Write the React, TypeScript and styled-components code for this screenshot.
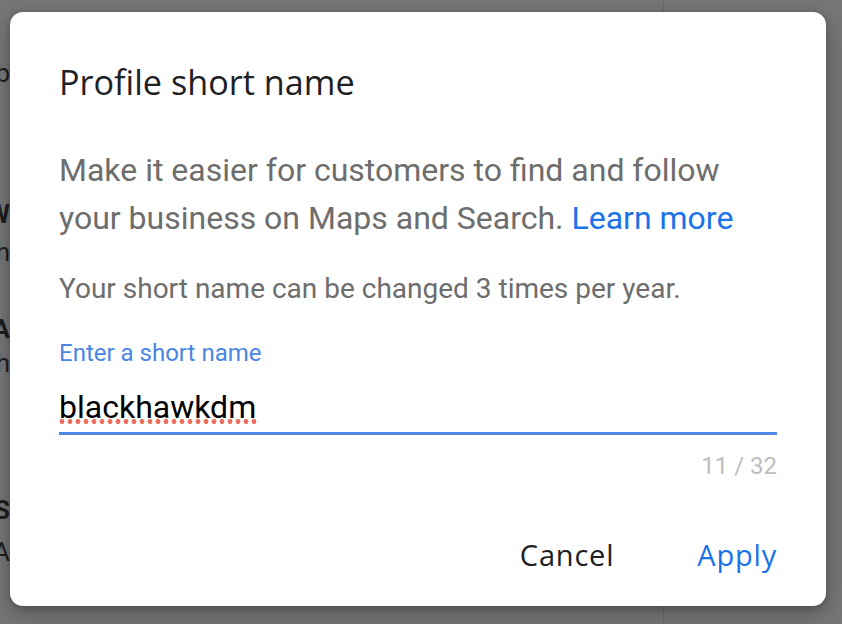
import React from "react";
import styled, { createGlobalStyle } from "styled-components";

const Global = createGlobalStyle`
  html, body { margin: 0; padding: 0; }
  body { width: 842px; height: 624px; overflow: hidden; background: #767676; }
`;

const Page = styled.div`
  position: relative;
  width: 842px;
  height: 624px;
  display: flex;
  background: #767676;
  font-family: Roboto, "Liberation Sans", sans-serif;
`;

const SideColumn = styled.div`
  width: 10px;
  overflow: hidden;
  display: flex;
  flex-direction: column;
  align-items: flex-end;
  padding-top: 56px;
`;

const Fragment = styled.div<{ $bold?: boolean; $gap?: number }>`
  white-space: nowrap;
  font-size: 26px;
  line-height: 34px;
  color: #1e1e1e;
  font-weight: ${(p) => (p.$bold ? 700 : 400)};
  margin-top: ${(p) => p.$gap ?? 0}px;
`;

const Main = styled.div`
  flex: 1;
  display: flex;
`;

const MainLeft = styled.div`
  width: 653px;
  border-right: 1px solid #6a6a6a;
`;

const Overlay = styled.div`
  position: absolute;
  inset: 0;
  padding: 12px 16px 18px 10px;
  display: flex;
`;

const Dialog = styled.div`
  flex: 1;
  background: #fff;
  border-radius: 13px;
  box-shadow: 0 8px 24px rgba(0, 0, 0, 0.25), 0 2px 6px rgba(0, 0, 0, 0.2);
  padding: 0 49px;
  display: flex;
  flex-direction: column;
`;

const Title = styled.h1`
  margin: 50px 0 0;
  font-family: "Open Sans", Roboto, sans-serif;
  font-weight: 400;
  font-size: 34.2px;
  line-height: 40px;
  color: #202124;
`;

const Description = styled.p`
  margin: 44px 0 0;
  font-size: 32px;
  line-height: 48px;
  color: #6d6d6d;
`;

const Link = styled.a`
  color: #1a73e8;
  text-decoration: none;
`;

const Note = styled.p`
  margin: 29px 0 0;
  font-size: 28px;
  line-height: 36px;
  color: #6d6d6d;
`;

const Field = styled.div`
  margin-top: 31px;
  display: flex;
  flex-direction: column;
`;

const Label = styled.label`
  font-size: 24px;
  line-height: 30px;
  color: #4a86e3;
`;

const InputRow = styled.div`
  padding: 19px 0 5px;
  border-bottom: 3px solid #4f87e6;
  display: flex;
`;

const Value = styled.span`
  position: relative;
  font-size: 32px;
  line-height: 40px;
  color: #000;

  &::after {
    content: "";
    position: absolute;
    left: -1px;
    right: -1px;
    bottom: 3px;
    height: 5px;
    background-image: radial-gradient(circle, #e8705c 2.3px, transparent 2.7px);
    background-size: 8px 5px;
    background-repeat: repeat-x;
  }
`;

const Counter = styled.div`
  margin-top: 16px;
  text-align: right;
  font-size: 24px;
  line-height: 30px;
  color: #bdbdbd;
`;

const Actions = styled.div`
  margin-top: 54px;
  display: flex;
  justify-content: flex-end;
  gap: 83px;
`;

const ActionButton = styled.button<{ $primary?: boolean }>`
  border: none;
  background: none;
  padding: 0;
  font-family: "Open Sans", Roboto, sans-serif;
  font-size: 29px;
  line-height: 40px;
  font-weight: 500;
  letter-spacing: 0.8px;
  color: ${(p) => (p.$primary ? "#1a73e8" : "#202124")};
  cursor: pointer;
`;

export default function App() {
  return (
    <>
      <Global />
      <Page>
        <SideColumn>
          <Fragment>Your business is listed as blackhawkdm Lab</Fragment>
          <Fragment $bold $gap={107}>Business name shown in reviews for your BW</Fragment>
          <Fragment $gap={4}>Customers will use this to search</Fragment>
          <Fragment $bold $gap={43}>Address shown to customers NBA</Fragment>
          <Fragment>Add an address where customers can reach</Fragment>
          <Fragment $bold $gap={113}>Service areas Hours and days ES</Fragment>
          <Fragment $gap={8}>Open and closed days for the listing LA</Fragment>
        </SideColumn>
        <Main>
          <MainLeft />
        </Main>
        <Overlay>
          <Dialog>
            <Title>Profile short name</Title>
            <Description>
              Make it easier for customers to find and follow your business on Maps and Search.{" "}
              <Link href="#">Learn more</Link>
            </Description>
            <Note>Your short name can be changed 3 times per year.</Note>
            <Field>
              <Label>Enter a short name</Label>
              <InputRow>
                <Value>blackhawkdm</Value>
              </InputRow>
              <Counter>11 / 32</Counter>
            </Field>
            <Actions>
              <ActionButton>Cancel</ActionButton>
              <ActionButton $primary>Apply</ActionButton>
            </Actions>
          </Dialog>
        </Overlay>
      </Page>
    </>
  );
}
